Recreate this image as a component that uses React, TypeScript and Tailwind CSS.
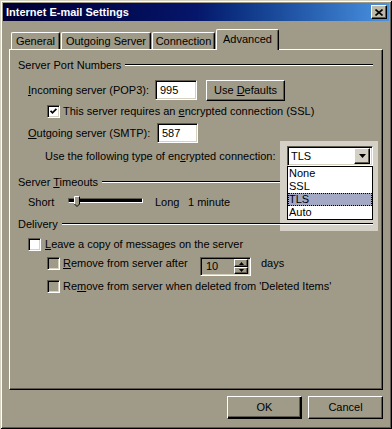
import React from 'react';

const RAISED =
  'border border-t-white border-l-white border-r-black border-b-black shadow-[inset_-1px_-1px_#5f5b4e]';
const SUNKEN =
  'border border-t-[#5f5b4e] border-l-[#5f5b4e] border-r-white border-b-white shadow-[inset_1px_1px_#000,inset_-1px_-1px_#d6d2c2]';

function U({ children }: { children: React.ReactNode }) {
  return <span className="underline underline-offset-[1px]">{children}</span>;
}

function Check({ checked, white }: { checked?: boolean; white?: boolean }) {
  return (
    <div
      className={`w-[13px] h-[13px] shrink-0 flex items-center justify-center ${SUNKEN} ${
        white ? 'bg-white' : 'bg-[#a09b89]'
      }`}
    >
      {checked && (
        <svg width="7" height="7" viewBox="0 0 7 7">
          <polyline points="0.6,2.8 2.5,4.8 6.4,0.9" fill="none" stroke="#000" strokeWidth="1.7" />
        </svg>
      )}
    </div>
  );
}

function GroupHeader({ label, lift }: { label: React.ReactNode; lift?: boolean }) {
  return (
    <div className={`flex items-center h-[14px] pl-[8px] pr-[9px] ${lift ? 'relative z-[2]' : ''}`}>
      <span className="whitespace-nowrap">{label}</span>
      <div className="flex-1 ml-[4px] h-[2px] border-t border-t-black border-b border-b-white" />
    </div>
  );
}

function Tab({ label, width, active }: { label: string; width: string; active?: boolean }) {
  return (
    <div
      className={`${width} ml-[1px] flex items-center justify-center rounded-t-[2px] border-l border-t border-r border-l-white border-t-white border-r-black shadow-[inset_-1px_0_#5f5b4e] bg-[#a09b89] ${
        active ? 'h-[21px] -mb-[1px] relative z-10 pb-[2px]' : 'h-[17px]'
      }`}
    >
      {label}
    </div>
  );
}

export default function App() {
  return (
    <div className="w-[392px] h-[429px] bg-[#a09b89] p-[3px] flex flex-col text-[11px] leading-[13px] text-black font-['Liberation_Sans',Arial,sans-serif] shadow-[inset_1px_1px_#d6d2c2,inset_-1px_-1px_#000,inset_2px_2px_#fff,inset_-2px_-2px_#5f5b4e]">
      {/* title bar */}
      <div className="h-[18px] shrink-0 flex items-center justify-between pl-[3px] pr-[2px] bg-gradient-to-r from-[#000033] via-[#06166a] to-[#4a94e2]">
        <span className="text-white font-bold">Internet E-mail Settings</span>
        <div className={`w-[16px] h-[14px] flex items-center justify-center bg-[#bdb9a9] ${RAISED}`}>
          <svg width="8" height="7" viewBox="0 0 8 7">
            <path d="M0.5 0.5 L7.5 6.5 M7.5 0.5 L0.5 6.5" stroke="#000" strokeWidth="1.6" />
          </svg>
        </div>
      </div>

      {/* tabs */}
      <div className="mt-[8px] h-[20px] flex items-end pl-[7px]">
        <Tab label="General" width="w-[49px]" />
        <Tab label="Outgoing Server" width="w-[90px]" />
        <Tab label="Connection" width="w-[63px]" />
        <Tab label="Advanced" width="w-[63px]" active />
      </div>

      {/* panel */}
      <div className="ml-[6px] w-[374px] h-[341px] relative border border-t-white border-l-white border-r-black border-b-black shadow-[inset_-1px_-1px_#5f5b4e] flex flex-col">
        {/* light area behind the open list */}
        <div className="absolute left-[270px] top-[91px] w-[98px] h-[90px] bg-[#d4d0c6] z-[1]" />

        <div className="mt-[8px]">
          <GroupHeader label="Server Port Numbers" />
        </div>

        <div className="mt-[8px] h-[20px] flex items-center pl-[18px]">
          <span className="w-[127px]">
            <U>I</U>ncoming server (POP3):
          </span>
          <div className={`w-[42px] h-[20px] bg-white flex items-center pl-[4px] ${SUNKEN}`}>995</div>
          <button className={`ml-[9px] w-[79px] h-[21px] flex items-center justify-center ${RAISED}`}>
            <span>
              Use <U>D</U>efaults
            </span>
          </button>
        </div>

        <div className="mt-[4px] h-[15px] flex items-center pl-[37px]">
          <Check checked white />
          <span className="ml-[3px]">
            This server requires an <U>e</U>ncrypted connection (SSL)
          </span>
        </div>

        <div className="mt-[4px] h-[20px] flex items-center pl-[18px]">
          <span className="w-[129px]">
            <U>O</U>utgoing server (SMTP):
          </span>
          <div className={`w-[41px] h-[20px] bg-white flex items-center pl-[4px] ${SUNKEN}`}>587</div>
        </div>

        <div className="mt-[3px] h-[20px] flex items-center pl-[35px] relative z-[3]">
          <span className="w-[242px]">
            Use the following type of en<U>c</U>rypted connection:
          </span>
          <div className="relative">
            <div className={`w-[86px] h-[20px] bg-white flex items-center pl-[3px] pr-[2px] ${SUNKEN}`}>
              <span className="flex-1">TLS</span>
              <div className={`w-[16px] h-[16px] flex items-center justify-center bg-[#d4d0c6] ${RAISED}`}>
                <svg width="7" height="4" viewBox="0 0 7 4">
                  <polygon points="0,0 7,0 3.5,4" fill="#000" />
                </svg>
              </div>
            </div>
            <div className="absolute left-0 top-[20px] w-[86px] border border-black bg-white flex flex-col">
              <div className="h-[13px] pl-[1px] flex items-center">None</div>
              <div className="h-[13px] pl-[1px] flex items-center">SSL</div>
              <div className="h-[13px] pl-[1px] flex items-center bg-[#a3a9c4] outline-1 outline-dotted outline-black -outline-offset-1">
                TLS
              </div>
              <div className="h-[13px] pl-[1px] flex items-center">Auto</div>
            </div>
          </div>
        </div>

        <div className="mt-[9px]">
          <GroupHeader
            label={
              <>
                Server <U>T</U>imeouts
              </>
            }
          />
        </div>

        <div className="mt-[6px] h-[14px] flex items-center pl-[18px]">
          <span className="w-[40px]">Short</span>
          <div className="relative w-[75px] h-[5px] mb-[4px] border border-t-[#5f5b4e] border-l-[#5f5b4e] border-r-white border-b-white bg-black">
            <svg className="absolute left-[5px] -top-[3px]" width="6" height="11" viewBox="0 0 6 11">
              <polygon points="0,0 6,0 6,8 3,11 0,8" fill="#a09b89" />
              <polyline points="0.5,8 0.5,0.5 5.5,0.5" fill="none" stroke="#fff" strokeWidth="1" />
              <polyline points="5.5,0.5 5.5,8 3,10.5 0.5,8" fill="none" stroke="#000" strokeWidth="1" />
            </svg>
          </div>
          <span className="ml-[12px] w-[33px]">Long</span>
          <span>1 minute</span>
        </div>

        <div className="mt-[8px] relative z-[2]">
          <GroupHeader label="Delivery" lift />
        </div>

        <div className="mt-[5px] h-[16px] flex items-center pl-[18px]">
          <Check white />
          <span className="ml-[4px]">
            <U>L</U>eave a copy of messages on the server
          </span>
        </div>

        <div className="mt-[4px] h-[20px] flex items-start pl-[37px]">
          <div className="mt-[1px]">
            <Check />
          </div>
          <span className="ml-[3px] w-[137px] mt-[1px]">
            <U>R</U>emove from server after
          </span>
          <div className={`mt-[1px] w-[51px] h-[19px] flex items-center pl-[5px] pr-[2px] ${SUNKEN}`}>
            <span className="flex-1">10</span>
            <div className="flex flex-col">
              <div className={`w-[14px] h-[8px] flex items-center justify-center ${RAISED}`}>
                <svg width="5" height="3" viewBox="0 0 5 3">
                  <polygon points="2.5,0 5,3 0,3" fill="#000" />
                </svg>
              </div>
              <div className={`w-[14px] h-[7px] flex items-center justify-center ${RAISED}`}>
                <svg width="5" height="3" viewBox="0 0 5 3">
                  <polygon points="0,0 5,0 2.5,3" fill="#000" />
                </svg>
              </div>
            </div>
          </div>
          <span className="ml-[10px] mt-[1px]">days</span>
        </div>

        <div className="mt-[3px] h-[14px] flex items-center pl-[37px]">
          <Check />
          <span className="ml-[3px]">
            Re<U>m</U>ove from server when deleted from 'Deleted Items'
          </span>
        </div>
      </div>

      {/* buttons */}
      <div className="mt-[6px] flex justify-end pr-[6px] gap-[6px]">
        <button className="w-[75px] h-[23px] flex items-center justify-center border border-t-white border-l-white border-r-black border-b-black shadow-[inset_-1px_-1px_#000,inset_-2px_-2px_#5f5b4e]">
          OK
        </button>
        <button className={`w-[75px] h-[23px] flex items-center justify-center ${RAISED}`}>Cancel</button>
      </div>
    </div>
  );
}
